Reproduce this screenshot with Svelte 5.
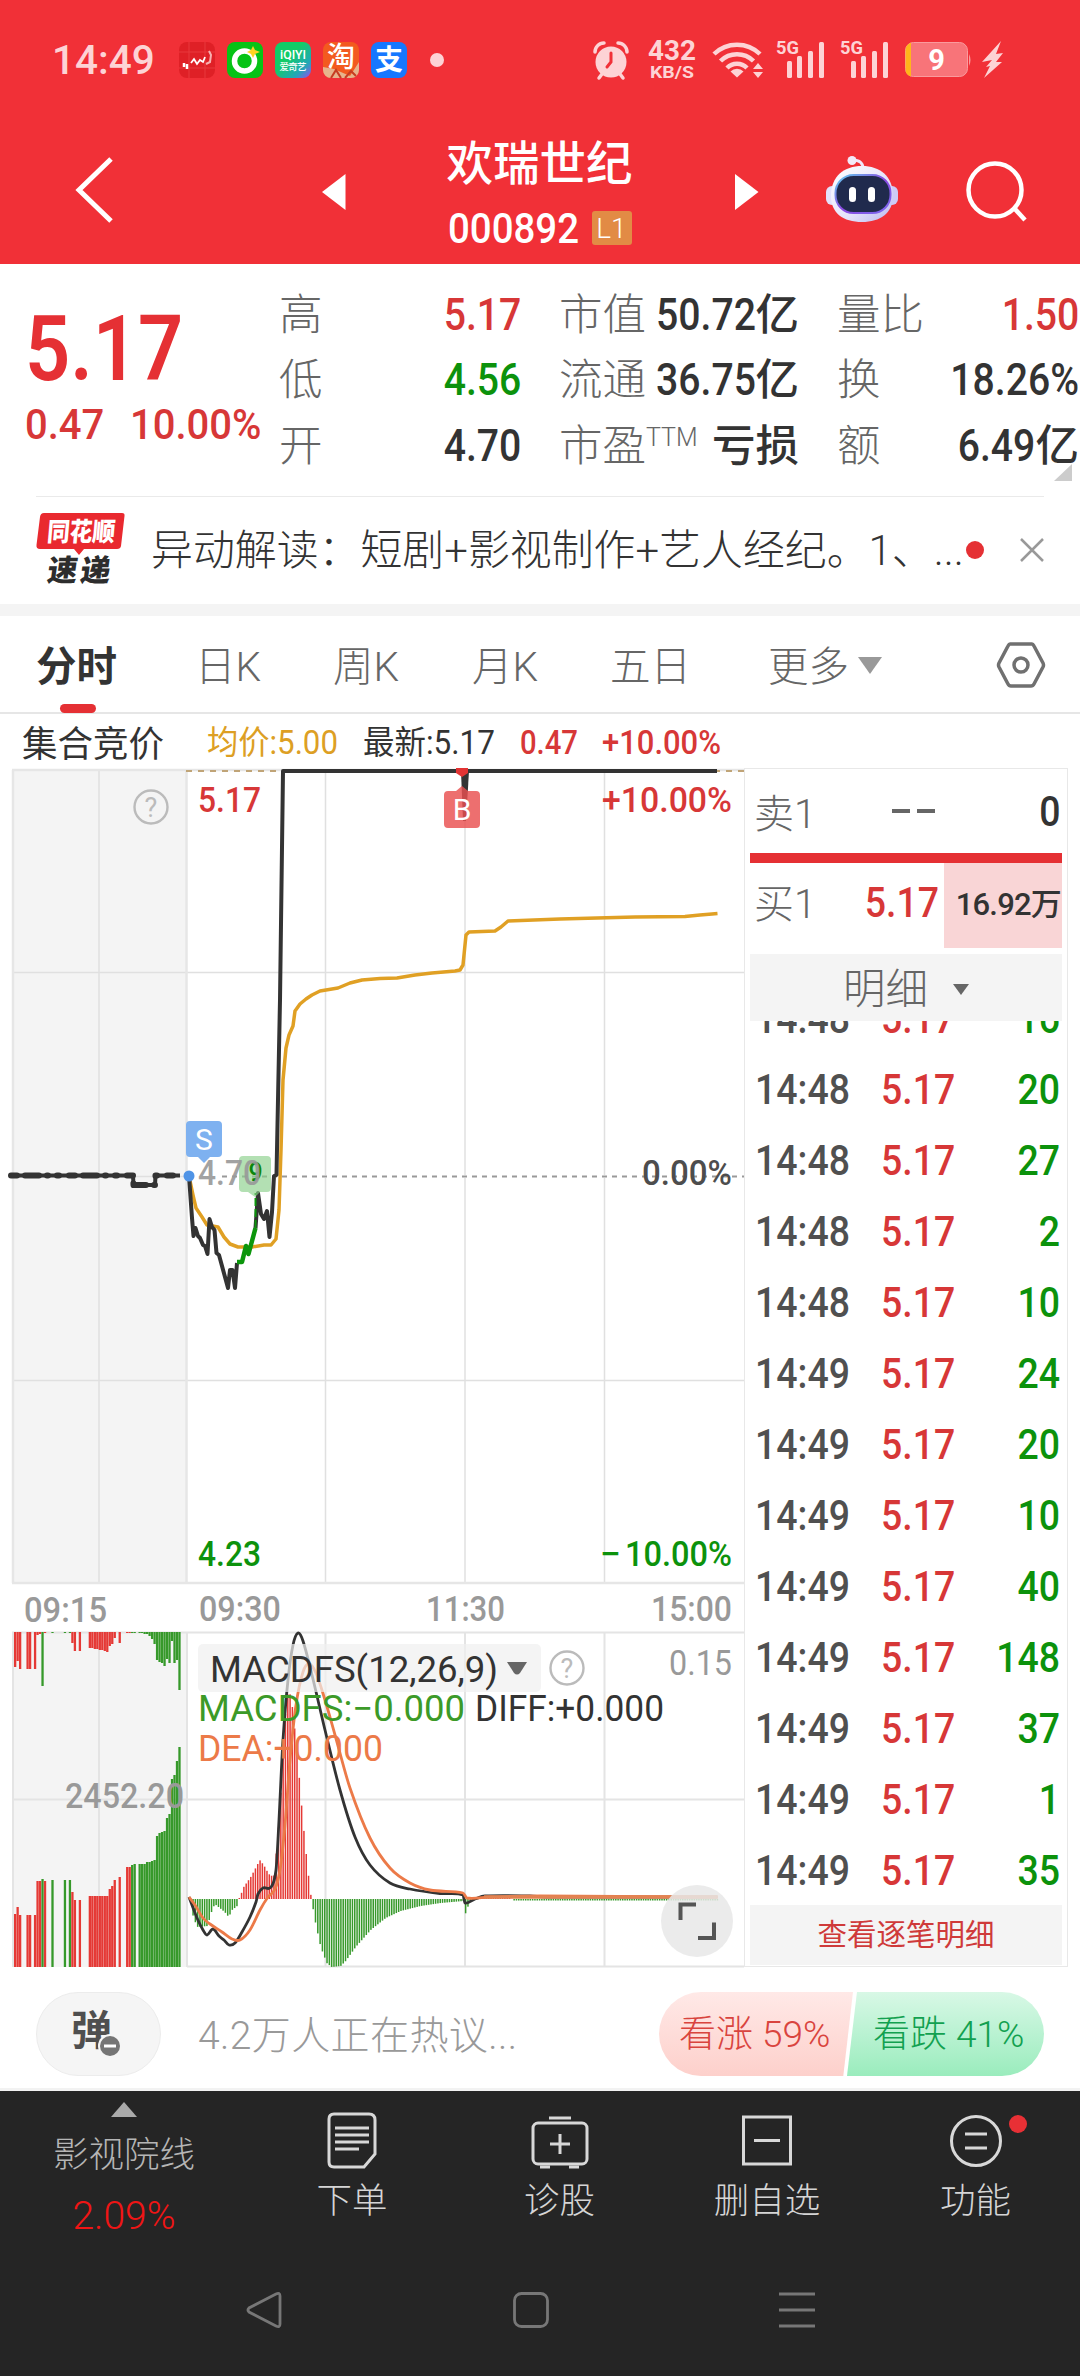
<script lang="ts">
    type Point = [number, number];

    const quotes = [
        { label: "高", value: "5.17", unit: "", tone: "up" },
        { label: "市值", value: "50.72", unit: "亿", tone: "" },
        { label: "量比", value: "1.50", unit: "", tone: "up" },
        { label: "低", value: "4.56", unit: "", tone: "down" },
        { label: "流通", value: "36.75", unit: "亿", tone: "" },
        { label: "换", value: "18.26%", unit: "", tone: "" },
        { label: "开", value: "4.70", unit: "", tone: "" },
        { label: "市盈", sup: "TTM", value: "", unit: "亏损", tone: "" },
        { label: "额", value: "6.49", unit: "亿", tone: "" },
    ];

    const trades = [
        { time: "14:48", price: "5.17", volume: 16 },
        { time: "14:48", price: "5.17", volume: 20 },
        { time: "14:48", price: "5.17", volume: 27 },
        { time: "14:48", price: "5.17", volume: 2 },
        { time: "14:48", price: "5.17", volume: 10 },
        { time: "14:49", price: "5.17", volume: 24 },
        { time: "14:49", price: "5.17", volume: 20 },
        { time: "14:49", price: "5.17", volume: 10 },
        { time: "14:49", price: "5.17", volume: 40 },
        { time: "14:49", price: "5.17", volume: 148 },
        { time: "14:49", price: "5.17", volume: 37 },
        { time: "14:49", price: "5.17", volume: 1 },
        { time: "14:49", price: "5.17", volume: 35 },
    ];

    const tabs = ["日K", "周K", "月K", "五日"];
    const gridX = [99, 325.5, 465, 604.5];

    const priceLine =
        "189,1176 190,1190 192,1218 193.5,1236 195.5,1228 198,1236 200,1238 203,1245 205,1246 207.5,1254 209.5,1219 212,1227 214.5,1230 216.5,1253 219,1255 228,1288 230,1270 232.5,1270 235,1288 237,1263";
    const reboundLine = "237,1262 242,1262 246,1246 248.5,1254 255.5,1228";
    const surgeLine =
        "255.5,1228 258,1193 261,1214 264,1219 267,1211 269.5,1237 272,1212 274,1176 276.5,1175 280,1000 283,771 717,771";
    const averageLine =
        "189,1176 193,1195 196,1208 202,1217 207,1225 218,1227 224,1237 230,1244 238,1247 252,1247 264,1245 271,1245 276,1239 279,1210 281,1150 283,1080 286,1048 289,1035 293,1026 295,1011 300,1004 306,999 312,995 320,991 338,988 350,983 362,980 380,978.5 397,978 415,975 432,973 455,971 460,970 463,965 466,935 469,932 495,931 501,927 508,921 560,919 597,918 635,917 685,916.5 700,915 712,914 717.5,913.5";
    const auctionLine =
        "11,1175.5 133,1175.5 133.5,1185 155,1185 155.5,1175.5 180,1175.5";

    const diffPoints: Point[] = [
        [189, 1897], [192, 1905], [197, 1918], [203, 1930], [207, 1935], [213, 1929],
        [219, 1936], [224, 1940], [229, 1945], [235, 1943], [242, 1932], [250, 1917],
        [256, 1902], [258, 1894], [263, 1888], [271, 1887], [276, 1870], [279, 1820],
        [283, 1740], [288, 1680], [293, 1645], [298, 1633], [303, 1641], [312, 1675],
        [325, 1730], [340, 1790], [355, 1837], [370, 1865], [390, 1883], [410, 1889],
        [440, 1893.5], [463, 1895], [465, 1903], [475, 1899], [485, 1896], [530, 1896],
        [545, 1897], [717, 1897],
    ];
    const deaPoints: Point[] = [
        [189, 1897], [195, 1905], [203, 1918], [210, 1924], [222, 1932], [232, 1939],
        [240, 1940], [250, 1930], [260, 1910], [268, 1897], [275, 1889], [280, 1870],
        [285, 1825], [290, 1760], [296, 1705], [303, 1672], [309, 1664], [316, 1673],
        [325, 1700], [335, 1735], [350, 1788], [370, 1838], [390, 1868], [410, 1883],
        [430, 1890], [463, 1893], [467, 1898], [490, 1897], [540, 1896], [717, 1897],
    ];

    // Histogram outline: negative values are drawn above the zero line
    const histogram: Point[] = [
        [189, 0], [193, 20], [197, 28], [207, 27], [210, 15], [214, 5], [219, 9],
        [224, 13], [228, 18], [232, 10], [236, 8], [238, 0], [240, -4], [243, -12],
        [250, -22], [256, -33], [259, -39], [263, -34], [268, -25], [273, -22],
        [277, -60], [281, -120], [285, -190], [288, -212], [292, -190], [297, -140],
        [302, -80], [307, -30], [310, -5], [311, 2], [315, 25], [320, 48], [326, 64],
        [331, 68], [340, 67], [345, 62], [355, 48], [370, 31], [385, 19], [400, 12],
        [420, 7], [440, 4], [463, 2], [465, 15], [468, 5], [471, 1], [480, -1],
        [510, -1], [513, 1.5], [718, 1.5],
    ];

    function valueAt(points: Point[], x: number): number {
        for (let i = 1; i < points.length; i++) {
            const [x0, y0] = points[i - 1];
            const [x1, y1] = points[i];
            if (x <= x1) return y0 + ((x - x0) / (x1 - x0)) * (y1 - y0);
        }
        return 0;
    }

    // Bezier through all points, tangents taken from the neighbours
    function smooth(points: Point[]): string {
        let d = `M${points[0][0]} ${points[0][1]}`;
        for (let i = 1; i < points.length; i++) {
            const p0 = points[Math.max(i - 2, 0)];
            const p1 = points[i - 1];
            const p2 = points[i];
            const p3 = points[Math.min(i + 1, points.length - 1)];
            const k = (p2[0] - p1[0]) / 3;
            const s1 = (p2[1] - p0[1]) / (p2[0] - p0[0]);
            const s2 = (p3[1] - p1[1]) / (p3[0] - p1[0]);
            d += `C${p1[0] + k} ${p1[1] + k * s1} ${p2[0] - k} ${p2[1] - k * s2} ${p2[0]} ${p2[1]}`;
        }
        return d;
    }

    const macdBars = Array.from({ length: 229 }, (_, i) => {
        const x = 190 + i * 2.31;
        return { x, h: valueAt(histogram, x) };
    });

    // [slot, colour, unmatched volume, matched volume]
    const auction: [number, string, number, number][] = [
        [0, "r", 35, 53], [1, "r", 29, 60], [2, "r", 37, 52], [5, "r", 37, 52],
        [6, "r", 37, 52], [8, "r", 37, 52], [9, "r", 3, 86], [10, "r", 2, 86],
        [11, "g", 54, 88], [12, "r", 1, 86], [15, "g", 1, 87], [20, "g", 1, 87],
        [22, "g", 1, 87], [23, "r", 11, 75], [24, "r", 19, 67], [26, "r", 19, 67],
        [30, "r", 16, 71], [31, "r", 16, 71], [32, "r", 17, 71], [33, "r", 17, 71],
        [34, "r", 18, 71], [35, "r", 18, 71], [36, "r", 19, 71], [37, "r", 20, 71],
        [38, "r", 14, 78], [39, "r", 12, 81], [40, "r", 6, 87], [42, "r", 11, 90],
        [45, "r", 1, 100], [46, "r", 1, 100], [47, "g", 1, 102], [48, "g", 1, 103],
        [50, "g", 1, 103], [51, "g", 1, 103], [52, "g", 2, 103], [53, "g", 2, 105],
        [54, "g", 4, 105], [55, "g", 7, 106], [56, "g", 12, 107], [57, "g", 28, 131],
        [58, "g", 30, 134], [59, "g", 31, 135], [60, "g", 34, 136], [61, "g", 27, 149],
        [62, "g", 31, 153], [63, "g", 9, 188], [64, "g", 31, 192], [65, "g", 28, 206],
        [66, "g", 58, 220],
    ];
</script>

{#snippet label(text: string, x: number, y: number, width: number, size: number, tone: string)}
    <text {x} {y} class="chart-label {tone}" font-size={size} textLength={width} lengthAdjust="spacingAndGlyphs">{text}</text>
{/snippet}

{#snippet help(x: number, y: number)}
    <circle cx={x} cy={y} r="16.5" fill="none" stroke="#bbb" stroke-width="2.4" />
    <text {x} y={y + 10} class="help" text-anchor="middle">?</text>
{/snippet}

{#snippet signal()}
    <svg width="50" height="38" viewBox="0 0 50 38" fill="#fdd3d5">
        <text x="0" y="13" font-size="18" font-weight="700" textLength="23" lengthAdjust="spacingAndGlyphs">5G</text>
        <rect x="11" y="20" width="5" height="17" rx="1.5" />
        <rect x="21" y="15" width="5" height="22" rx="1.5" />
        <rect x="32" y="10" width="5" height="27" rx="1.5" />
        <rect x="43" y="1" width="5" height="36" rx="1.5" />
    </svg>
{/snippet}

<div class="app">
    <header>
        <div class="status">
            <span class="clock">14:49</span>
            <div class="notices">
                <svg width="36" height="36" viewBox="0 0 36 36">
                    <rect width="36" height="36" rx="8" fill="#df2026" />
                    <path d="M0 10H36M0 26H36M10 0V36M26 0V36" stroke="#e8383c" />
                    <path d="M5 25V21M8 27V22" stroke="#fff" stroke-width="2.5" />
                    <path d="M12 21L15 17L18 22L21 18L24 20L26 15" stroke="#fff" stroke-width="1.8" fill="none" />
                    <path d="M30 9L32 13L31 20L27 22" stroke="#f7b0b0" stroke-width="2" fill="none" />
                </svg>
                <svg width="36" height="36" viewBox="0 0 36 36">
                    <rect width="36" height="36" rx="8" fill="#06c316" />
                    <circle cx="17.5" cy="19" r="10" fill="none" stroke="#fff" stroke-width="5.5" />
                    <path d="M26 4L28 8L33 10L28 12L26 16L24 12L20 10L24 8Z" fill="#ffd321" />
                </svg>
                <svg width="36" height="36" viewBox="0 0 36 36">
                    <defs>
                        <linearGradient id="iqiyi" x1="0" y1="0" x2="1" y2="1">
                            <stop offset="0.4" stop-color="#12cc67" />
                            <stop offset="0.75" stop-color="#22a7b7" />
                            <stop offset="1" stop-color="#9a4cf0" />
                        </linearGradient>
                    </defs>
                    <rect width="36" height="36" rx="8" fill="url(#iqiyi)" />
                    <text x="5" y="17" font-size="12" font-weight="500" fill="#fff" textLength="26" lengthAdjust="spacingAndGlyphs">iQIYI</text>
                    <text x="4.5" y="28" font-size="9.5" font-weight="500" fill="#fff" textLength="27">爱奇艺</text>
                </svg>
                <svg width="36" height="36" viewBox="0 0 36 36">
                    <rect width="36" height="36" rx="8" fill="#f35a1f" />
                    <path d="M0 25L11 27L27 34L36 20V28A8 8 0 0 1 28 36H8A8 8 0 0 1 0 28Z" fill="#e7b48c" />
                    <path d="M8 36L13 28L18 36M22 36L28 29L33 34" stroke="#c63d22" stroke-width="2" fill="none" />
                    <text x="4" y="25" font-size="28" font-weight="500" fill="#fff">淘</text>
                </svg>
                <svg width="36" height="36" viewBox="0 0 36 36">
                    <rect width="36" height="36" rx="8" fill="#1677ff" />
                    <text x="4" y="28" font-size="28" font-weight="700" fill="#fff">支</text>
                </svg>
            </div>
            <span class="more-dot"></span>
            <div class="system">
                <svg width="36" height="38" viewBox="0 0 36 38">
                    <circle cx="18" cy="21" r="15.5" fill="#fdd3d5" />
                    <path d="M2 11A9 9 0 0 1 11 2M25 2A9 9 0 0 1 34 11M9 33L6 37M27 33L30 37" stroke="#fdd3d5" stroke-width="3.5" stroke-linecap="round" fill="none" />
                    <path d="M18 12V21L14 26" stroke="#f13037" stroke-width="3" stroke-linecap="round" fill="none" />
                </svg>
                <svg width="52" height="38" viewBox="0 0 52 38" fill="#fdd3d5" font-weight="700">
                    <text x="1" y="19" font-size="27" textLength="48" lengthAdjust="spacingAndGlyphs">432</text>
                    <text x="3" y="37" font-size="17" textLength="44" lengthAdjust="spacingAndGlyphs">KB/S</text>
                </svg>
                <svg width="52" height="38" viewBox="0 0 52 38" fill="none" stroke="#fdd3d5" stroke-width="4.5">
                    <path d="M2 13A33 33 0 0 1 48 13M8.5 20A23.5 23.5 0 0 1 41.5 20M15 27A14 14 0 0 1 35 27" />
                    <path d="M25 36.5L18.5 30.5A9 9 0 0 1 31.5 30.5Z" fill="#fdd3d5" stroke="none" />
                    <path d="M41 28L46 22L51 28ZM41 31L46 37L51 31Z" fill="#fdd3d5" stroke="none" />
                </svg>
                {@render signal()}
                {@render signal()}
                <svg width="67" height="36" viewBox="0 0 67 36">
                    <rect x="0.5" y="0.5" width="62" height="34" rx="8" fill="#f87479" stroke="#fa9a9d" />
                    <path d="M8 0.5A7.5 7.5 0 0 0 0.5 8V27A7.5 7.5 0 0 0 6 34.5V1Z" fill="#ffb51b" />
                    <path d="M64 12Q67 18 64 24Z" fill="#fa9a9d" />
                    <text x="31.5" y="28" font-size="29" font-weight="700" fill="#fff" text-anchor="middle">9</text>
                </svg>
                <svg width="22" height="38" viewBox="0 0 22 38">
                    <path d="M19 0L0 21L10 19L4 26L8 25L2 37L20 21L14 21L21 12L14 13Z" fill="#fdd3d5" />
                </svg>
            </div>
        </div>
        <div class="titlebar">
            <svg class="back" width="38" height="66" viewBox="0 0 38 66">
                <path d="M35 2L3 33L35 64" fill="none" stroke="#fff" stroke-width="5" />
            </svg>
            <svg width="24" height="36" viewBox="0 0 24 36"><path d="M0 18L23.5 0V36Z" fill="#fff" /></svg>
            <div class="stock">
                <h1>欢瑞世纪</h1>
                <div class="code">
                    <svg width="132" height="34" viewBox="0 0 132 34">
                        <text x="0" y="32" font-size="42" font-weight="500" fill="#fff" textLength="131" lengthAdjust="spacingAndGlyphs">000892</text>
                    </svg>
                    <span class="level">L1</span>
                </div>
            </div>
            <svg class="next" width="24" height="36" viewBox="0 0 24 36"><path d="M23.5 18L0 0V36Z" fill="#fff" /></svg>
            <svg class="robot" width="74" height="68" viewBox="0 0 74 68">
                <defs>
                    <linearGradient id="shell" x1="0" y1="0" x2="1" y2="1">
                        <stop offset="0" stop-color="#fff" />
                        <stop offset="0.6" stop-color="#e4e2fa" />
                        <stop offset="1" stop-color="#b9b6f0" />
                    </linearGradient>
                    <linearGradient id="visor" x1="0" y1="0" x2="1" y2="1">
                        <stop offset="0" stop-color="#5fd0ee" />
                        <stop offset="0.5" stop-color="#8a49e0" />
                        <stop offset="1" stop-color="#7a6af0" />
                    </linearGradient>
                </defs>
                <path d="M27 4Q39 4 38 14" fill="none" stroke="#f0e6fa" stroke-width="3" />
                <circle cx="27" cy="4.5" r="4.5" fill="#f3e9f8" />
                <rect x="1" y="30" width="12" height="19" rx="6" fill="#e3e1fb" />
                <rect x="60" y="30" width="13" height="19" rx="6" fill="#cdcbf7" />
                <path d="M37 10C55 10 68 20 68 40C68 57 55 66 37 66C18 66 6 57 6 40C6 20 19 10 37 10Z" fill="url(#shell)" />
                <rect x="10.5" y="19" width="55" height="38" rx="18" fill="#202a4d" stroke="url(#visor)" stroke-width="2" />
                <rect x="24" y="31" width="7" height="15" rx="3.5" fill="#fff" />
                <rect x="43" y="31" width="7" height="15" rx="3.5" fill="#fff" />
            </svg>
            <svg width="62" height="62" viewBox="0 0 62 62" fill="none" stroke="#fff" stroke-width="4.5">
                <circle cx="29" cy="29" r="26.5" />
                <path d="M48 47L59 59" />
            </svg>
        </div>
    </header>

    <section class="quote">
        <div class="price">
            <div class="last"><span class="din">5.17</span></div>
            <div class="change"><span class="din">0.47</span><span class="din">10.00%</span></div>
        </div>
        <div class="stats">
            {#each quotes as q}
                <div class="stat">
                    <span class="name">{q.label}{#if q.sup}<sup>{q.sup}</sup>{/if}</span>
                    <span class="value {q.tone}"><span class="din right">{q.value}</span>{q.unit}</span>
                </div>
            {/each}
            <span class="corner"></span>
        </div>
    </section>

    <section class="news">
        <svg width="90" height="76" viewBox="0 0 90 76">
            <path d="M8 1H86Q89 1 88.5 4L85 34Q84.5 37 81 37H48L43 43L38 37H4Q0 37 0.5 33L4 5Q4.5 1 8 1Z" fill="#e9292f" />
            <text x="13" y="29" font-size="26" font-weight="900" fill="#fff" textLength="68" lengthAdjust="spacingAndGlyphs" transform="skewX(-5)">同花顺</text>
            <text x="20" y="69" font-size="30" font-weight="900" fill="#2d2d2d" textLength="63" transform="skewX(-8)">速递</text>
        </svg>
        <p>异动解读：短剧+影视制作+艺人经纪。1、...</p>
        <span class="unread"></span>
        <svg class="close" width="24" height="24" viewBox="0 0 24 24"><path d="M1 1L23 23M23 1L1 23" stroke="#999" stroke-width="2.5" /></svg>
    </section>

    <nav class="tabs">
        <div class="tab active">分时</div>
        {#each tabs as tab}
            <div class="tab">{tab}</div>
        {/each}
        <div class="tab">更多<i></i></div>
        <svg width="48" height="46" viewBox="0 0 48 46" fill="none" stroke="#707070" stroke-width="3.5">
            <path d="M13 2H35Q36 2 37 4L46 21Q47 23 46 25L37 42Q36 44 34 44H14Q12 44 11 42L2 25Q1 23 2 21L11 4Q12 2 13 2Z" />
            <circle cx="24" cy="23" r="7" />
        </svg>
    </nav>

    <main>
        <div class="charts">
            <svg width="744" height="913" viewBox="0 714 744 913">
                {@render label("集合竞价", 22, 757, 142, 36, "dark")}
                {@render label("均价:5.00", 207, 754, 131, 33, "gold")}
                {@render label("最新:5.17", 363, 754, 132, 33, "dark")}
                {@render label("0.47", 520, 754, 58, 33, "up medium")}
                {@render label("+10.00%", 602, 754, 119, 33, "up medium")}

                <rect x="13" y="770" width="174" height="813" fill="#f4f4f4" />
                <g stroke="#e0e0e0" stroke-width="1.5">
                    <path d="M12 972.5H744M12 1380.5H744M13 1176.5H744" />
                    {#each gridX as x}
                        <path d="M{x} 770V1583" />
                    {/each}
                </g>
                <path d="M12 770H744M13 770V1583M186.5 770V1583M12 1583H744" stroke="#e6e6e6" stroke-width="2.5" />
                <path d="M186 771H744" stroke="#c0a477" stroke-width="2" stroke-dasharray="6 6" />
                <path d="M187.5 1176.5H744" stroke="#fff" stroke-width="3" />
                <path d="M222 1176.5H744" stroke="#999" stroke-width="2" stroke-dasharray="5 5" />
                {@render help(151, 807)}

                {@render label("5.17", 198, 812, 63, 35, "up medium")}
                {@render label("+10.00%", 602, 812, 130, 35, "up medium")}
                {@render label("0.00%", 642, 1185, 90, 35, "grey-dark medium")}
                {@render label("4.23", 198, 1566, 63, 35, "down medium")}
                {@render label("−", 600, 1566, 21, 35, "down medium")}
                {@render label("10.00%", 625, 1566, 107, 35, "down medium")}
                {@render label("09:15", 24, 1622, 83, 35, "grey medium")}
                {@render label("09:30", 199, 1621, 82, 35, "grey medium")}
                {@render label("11:30", 426, 1621, 79, 35, "grey medium")}
                {@render label("15:00", 651, 1621, 81, 35, "grey medium")}

                <polyline points={auctionLine} class="price-line" />
                <polyline points={auctionLine} class="price-line auction-dots" />
                <polyline points={averageLine} fill="none" stroke="#e0a024" stroke-width="3.5" stroke-linejoin="round" />
                <polyline points={priceLine} class="price-line" />
                <polyline points={reboundLine} fill="none" stroke="#0c960c" stroke-width="4.5" stroke-linejoin="round" />
                <polyline points={surgeLine} class="price-line" />
                <path d="M255.5 1228V1193" stroke="#0c960c" stroke-width="2" stroke-dasharray="8 3" />
                <circle cx="189" cy="1176" r="5.5" fill="#5094e6" />

                <path d="M190 1121H218Q222 1121 222 1125V1153Q222 1157 218 1157H210L204 1163L198 1157H190Q186 1157 186 1153V1125Q186 1121 190 1121Z" fill="#7eb1f0" />
                <text x="204" y="1150" class="marker" fill="#fff" text-anchor="middle">S</text>
                <path d="M243 1156H267Q271 1156 271 1160V1188Q271 1192 267 1192H260L255 1197L248 1192H243Q239 1192 239 1188V1160Q239 1156 243 1156Z" fill="#8ad08a" opacity="0.65" />
                <text x="255.5" y="1181" font-size="25" font-weight="500" fill="#0c860c" text-anchor="middle">9</text>
                <g opacity="0.9">
                    {@render label("4.70", 198, 1185, 63, 35, "grey medium")}
                </g>

                <path d="M461 771H469L466 821H463Z" fill="#333" />
                <path d="M456 768H468V773L462 777L456 773Z" fill="#e23333" />
                <path d="M448 791H456L462 786L468 791H476Q480 791 480 795V824Q480 828 476 828H448Q444 828 444 824V795Q444 791 448 791Z" fill="#e94f4f" opacity="0.82" />
                <text x="462" y="820" class="marker" fill="#fff" text-anchor="middle">B</text>
            </svg>

            <svg width="744" height="342" viewBox="0 1627 744 342">
                <rect x="13" y="1632" width="174" height="335" fill="#f4f4f4" />
                <g stroke="#e4e4e4" stroke-width="2">
                    <path d="M12 1632.5H744M12 1799.5H744M187 1966.5H744M13 1632V1967M187 1632V1967" />
                    {#each gridX as x}
                        <path d="M{x} 1632V1967" />
                    {/each}
                </g>
                {#each auction as [slot, color, top, bottom]}
                    <rect x={14 + slot * 2.49} y="1632" width="2.3" height={top} class="bar-{color}" />
                    <rect x={14 + slot * 2.49} y={1967 - bottom} width="2.3" height={bottom} class="bar-{color}" />
                {/each}
                {#each macdBars as bar}
                    <rect x={bar.x} y={bar.h < 0 ? 1899 + bar.h : 1899} width="1.5" height={Math.abs(bar.h)} class={bar.h < 0 ? "bar-r" : "bar-g"} />
                {/each}
                <path d={smooth(diffPoints)} fill="none" stroke="#333" stroke-width="2.8" />
                <path d={smooth(deaPoints)} fill="none" stroke="#ec7a48" stroke-width="2.8" />
                <path d="M484 1897H718" stroke="#e28352" stroke-width="3.5" />

                <rect x="198" y="1644" width="343" height="48" rx="5" fill="#f0f0f0" opacity="0.7" />
                {@render label("MACDFS(12,26,9)", 210, 1682, 288, 36, "dark")}
                <path d="M507 1662H527L520 1673Q517 1676 514 1673Z" fill="#666" />
                {@render help(567, 1668)}
                {@render label("0.15", 669, 1675, 63, 35, "grey")}
                {@render label("MACDFS:−0.000", 198, 1721, 267, 36, "leaf")}
                {@render label("DIFF:+0.000", 475, 1721, 189, 36, "dark")}
                {@render label("DEA:+0.000", 198, 1761, 185, 36, "orange")}
                {@render label("2452.20", 65, 1808, 119, 35, "grey medium")}

                <circle cx="697" cy="1921" r="36" fill="#e8e8e8" opacity="0.85" />
                <path d="M680.5 1920V1904.5H696M714 1922.5V1938H698" fill="none" stroke="#555" stroke-width="4" />
            </svg>
        </div>

        <aside>
            <div class="order">
                <span class="side">卖1</span>
                <span class="dash"><i></i><i></i></span>
                <span class="din right amount">0</span>
            </div>
            <div class="divider"></div>
            <div class="order bid">
                <span class="side">买1</span>
                <span class="din right bid-price">5.17</span>
                <span class="bid-volume">16.92万</span>
            </div>
            <div class="detail-head">明细<i></i></div>
            <div class="trades">
                {#each trades as trade}
                    <div class="trade">
                        <span class="din">{trade.time}</span>
                        <span class="din up">{trade.price}</span>
                        <span class="din right down">{trade.volume}</span>
                    </div>
                {/each}
            </div>
            <div class="detail-more">查看逐笔明细</div>
        </aside>
    </main>

    <section class="talk">
        <div class="barrage">
            <svg width="44" height="46" viewBox="0 0 44 46">
                <text x="-1" y="35" font-size="41" font-weight="700" fill="#4f4f4f">弹</text>
                <circle cx="38" cy="36" r="12" fill="#f5f5f5" />
                <circle cx="38" cy="36" r="10" fill="#757575" />
                <path d="M32 36H44" stroke="#fff" stroke-width="3" />
            </svg>
        </div>
        <p>4.2万人正在热议...</p>
        <div class="vote">
            <div class="rise">看涨 59%</div>
            <div class="fall">看跌 41%</div>
        </div>
    </section>

    <footer>
        <div class="toolbar">
            <div class="sector">
                <i></i>
                <span>影视院线</span>
                <b>2.09%</b>
            </div>
            <div class="tool">
                <svg width="60" height="60" viewBox="0 0 60 60" fill="none" stroke="#d8d8d8" stroke-width="3">
                    <path d="M12 4H47Q53 4 53 10V44L42 57H12Q7 57 7 52V9Q7 4 12 4Z" />
                    <path d="M13 18H47M13 25H47M13 32H47M13 39H37" />
                </svg>
                <span>下单</span>
            </div>
            <div class="tool">
                <svg width="60" height="60" viewBox="0 0 60 60" fill="none" stroke="#d8d8d8" stroke-width="3">
                    <rect x="3" y="13" width="54" height="41" rx="5" />
                    <path d="M19 8H41M30 24V44M20 34H40M10 57H20M39 57H49" />
                </svg>
                <span>诊股</span>
            </div>
            <div class="tool">
                <svg width="60" height="60" viewBox="0 0 60 60" fill="none" stroke="#d8d8d8" stroke-width="3">
                    <rect x="6.5" y="7" width="47" height="47" />
                    <path d="M17 30.5H43" />
                </svg>
                <span>删自选</span>
            </div>
            <div class="tool">
                <svg width="60" height="60" viewBox="0 0 60 60" fill="none" stroke="#d8d8d8" stroke-width="3">
                    <circle cx="30" cy="31" r="24.5" />
                    <path d="M19 24H41M19 38H41" />
                </svg>
                <span>功能</span>
                <em></em>
            </div>
        </div>
        <div class="sysnav">
            <svg width="36" height="38" viewBox="0 0 36 38"><path d="M30 3L3 17Q1 19 3 21L30 35Q34 37 34 33V5Q34 1 30 3Z" fill="none" stroke="#777" stroke-width="2.8" /></svg>
            <svg width="36" height="38" viewBox="0 0 36 38"><rect x="1.5" y="2.5" width="33" height="33" rx="7" fill="none" stroke="#777" stroke-width="2.8" /></svg>
            <svg width="36" height="38" viewBox="0 0 36 38"><path d="M0 3H36M0 19H36M0 35H36" stroke="#777" stroke-width="3" /></svg>
        </div>
    </footer>
</div>

<style>
    :global(body) {
        background: #fff;
    }

    .app {
        width: 1080px;
        height: 2376px;
        overflow: hidden;
        display: flex;
        flex-direction: column;
        background: #fff;
        color: #333;
        font-family: Roboto, "Noto Sans CJK SC", sans-serif;
    }

    .app > * {
        flex: none;
        box-sizing: border-box;
    }

    svg {
        display: block;
        flex: none;
        overflow: visible;
    }

    p,
    h1 {
        margin: 0;
        white-space: nowrap;
    }

    .din {
        display: inline-block;
        font-weight: 500;
        transform: scaleX(0.9);
        transform-origin: left center;
        white-space: nowrap;
    }

    .right {
        transform-origin: right center;
        text-align: right;
    }

    .up {
        color: #d73737;
        fill: #d73737;
    }

    .down {
        color: #0c920c;
        fill: #0c920c;
    }

    header {
        height: 264px;
        background: #f13037;
    }

    .status {
        height: 120px;
        display: flex;
        align-items: center;
        padding: 0 76px 0 52px;
    }

    .clock {
        width: 127px;
        font-size: 40.5px;
        font-weight: 500;
        line-height: 40px;
        color: #fdd3d5;
    }

    .notices {
        display: flex;
        gap: 12px;
    }

    .more-dot {
        width: 14px;
        height: 14px;
        margin-left: 23px;
        border-radius: 50%;
        background: #fdd3d5;
    }

    .system {
        margin-left: auto;
        display: grid;
        grid-template-columns: 54px 65px 64px 64px 65px 77px 22px;
        align-items: center;
    }

    .titlebar {
        height: 144px;
        display: grid;
        grid-template-columns: 246px 100px 235px 102px 207px 62px;
        align-items: center;
        padding-left: 76px;
    }

    .back {
        margin-top: -4px;
    }

    .stock {
        display: flex;
        flex-direction: column;
        align-items: center;
        height: 144px;
        padding-top: 18px;
        box-sizing: border-box;
    }

    .stock h1 {
        font-size: 46.5px;
        line-height: 52px;
        font-weight: 500;
        color: #fff;
    }

    .code {
        display: flex;
        align-items: center;
        gap: 12px;
        margin-top: 21px;
    }

    .level {
        width: 40px;
        height: 34px;
        border-radius: 3px;
        background: #e28b45;
        color: #fff;
        font-size: 28px;
        font-weight: 300;
        line-height: 35px;
        text-align: center;
    }

    .next {
        justify-self: end;
    }

    .robot {
        margin-left: 66px;
        margin-top: -4px;
    }

    .quote {
        height: 232px;
        display: flex;
    }

    .price {
        width: 279px;
        padding: 42px 0 0 25px;
        box-sizing: border-box;
        color: #e53034;
    }

    .last {
        font-size: 90px;
        line-height: 88px;
    }

    .last .din {
        font-weight: 600;
        transform: scaleX(0.88);
    }

    .change {
        display: flex;
        gap: 20px;
        font-size: 43px;
        line-height: 60px;
        color: #d73737;
    }

    .change .din {
        transform: scaleX(0.93);
    }

    .stats {
        flex: 1;
        position: relative;
        display: grid;
        grid-template-columns: 242px 240px 242px;
        grid-auto-rows: 65.3px;
        column-gap: 38px;
        align-content: start;
        padding-top: 19px;
    }

    .stat {
        display: flex;
        justify-content: space-between;
        align-items: center;
        white-space: nowrap;
        font-size: 43.5px;
        line-height: 65px;
    }

    .name {
        flex: none;
        color: #666;
        font-weight: 300;
    }

    .name sup {
        font-size: 25px;
        line-height: 1;
        vertical-align: 15px;
    }

    .value {
        font-weight: 500;
        display: flex;
        justify-content: flex-end;
        width: 0;
        flex: 1;
    }

    .corner {
        position: absolute;
        right: 8px;
        bottom: 15px;
        border-left: 18px solid transparent;
        border-bottom: 17px solid #ccc;
    }

    .news {
        height: 120px;
        display: flex;
        align-items: center;
        margin: 0 36px;
        padding-bottom: 13px;
        border-top: 1px solid #eaeaea;
    }

    .news p {
        width: 815px;
        margin-left: 25px;
        font-size: 41.9px;
        font-weight: 300;
        line-height: 54px;
        padding-top: 2px;
    }

    .unread {
        flex: none;
        width: 18px;
        height: 18px;
        border-radius: 50%;
        background: #e53034;
    }

    .close {
        margin-left: auto;
    }

    .tabs {
        height: 110px;
        margin-top: -12px;
        border-top: 12px solid #f4f4f4;
        border-bottom: 2px solid #e6e6e6;
        display: grid;
        grid-template-columns: 159px 138px 139px 138px 158px 229px 48px;
        align-items: center;
        padding-left: 36px;
    }

    .tab {
        position: relative;
        font-size: 40.5px;
        font-weight: 300;
        line-height: 92px;
        padding-top: 5px;
        color: #666;
    }

    .tab.active {
        color: #333;
        font-weight: 700;
    }

    .tab.active::after {
        content: "";
        position: absolute;
        left: 24px;
        bottom: 0;
        width: 36px;
        height: 9px;
        border-radius: 5px;
        background: #e53034;
    }

    .tab i {
        display: inline-block;
        margin-left: 9px;
        vertical-align: 7px;
        border: 12px solid transparent;
        border-top: 17px solid #999;
        border-bottom: 0;
    }

    main {
        display: flex;
        height: 1253px;
    }

    .charts {
        width: 744px;
        height: 1253px;
    }

    .chart-label.medium {
        font-weight: 500;
    }

    .dark {
        fill: #333;
    }

    .gold {
        fill: #dd9f24;
    }

    .grey {
        fill: #999;
    }

    .grey-dark {
        fill: #4d4d4d;
    }

    .leaf {
        fill: #3c9a28;
    }

    .orange {
        fill: #ec7a48;
    }

    .help {
        font-size: 27px;
        fill: #bbb;
    }

    .marker {
        font-size: 30px;
    }

    .price-line {
        fill: none;
        stroke: #333;
        stroke-width: 4;
        stroke-linejoin: round;
    }

    .auction-dots {
        stroke-width: 6;
        stroke-linecap: round;
        stroke-dasharray: 6 8 14 8 1 9 2 10;
    }

    .bar-r {
        fill: #e53935;
    }

    .bar-g {
        fill: #36992a;
    }

    aside {
        width: 324px;
        height: 1199px;
        margin-top: 54px;
        padding: 0 5px;
        box-sizing: border-box;
        border: 1.5px solid #e8e8e8;
        display: flex;
        flex-direction: column;
    }

    aside .din {
        transform: scaleX(0.87);
    }

    .order {
        display: flex;
        align-items: center;
        height: 84px;
        flex: none;
        font-size: 43px;
        padding: 0 2px 0 4px;
    }

    .side {
        width: 138px;
        font-size: 40px;
        font-weight: 300;
        color: #666;
    }

    .dash {
        display: flex;
        gap: 7px;
    }

    .dash i {
        width: 18px;
        height: 4px;
        background: #666;
    }

    .amount {
        margin-left: auto;
    }

    .divider {
        flex: none;
        height: 10px;
        background: #e53034;
    }

    .bid {
        height: 85px;
        padding-right: 0;
    }

    .bid .side {
        width: 90px;
        padding-bottom: 9px;
    }

    .bid .bid-price {
        width: 95px;
        padding-bottom: 8px;
        color: #d73737;
    }

    .bid-volume {
        width: 118px;
        margin-left: auto;
        box-sizing: border-box;
        padding-right: 1px;
        background: #f9d5d6;
        font-size: 31px;
        font-weight: 500;
        letter-spacing: -0.8px;
        line-height: 84px;
        height: 85px;
        text-align: right;
    }

    .detail-head {
        flex: none;
        height: 67px;
        margin-top: 6px;
        background: #f4f4f4;
        color: #666;
        font-size: 42.5px;
        font-weight: 300;
        line-height: 71px;
        text-align: center;
    }

    .detail-head i {
        display: inline-block;
        margin-left: 25px;
        vertical-align: 9px;
        border: 8px solid transparent;
        border-top: 11px solid #666;
        border-bottom: 0;
    }

    .trades {
        flex: none;
        height: 884px;
        overflow: hidden;
        display: flex;
        flex-direction: column;
        justify-content: flex-end;
    }

    .trade {
        flex: none;
        height: 71px;
        display: grid;
        grid-template-columns: 126px 100px 1fr;
        align-items: center;
        padding: 0 2px 0 5px;
        font-size: 43px;
        color: #505050;
    }

    .detail-more {
        flex: none;
        height: 60px;
        background: #f4f4f4;
        color: #cf3a3a;
        font-size: 29.5px;
        line-height: 61px;
        text-align: center;
    }

    .talk {
        height: 124px;
        display: flex;
        align-items: center;
        padding: 13px 36px 0;
        border-bottom: 3px solid #f2f2f2;
    }

    .barrage {
        width: 125px;
        height: 84px;
        border-radius: 42px;
        box-sizing: border-box;
        border: 1px solid #ececec;
        background: #f5f5f5;
        display: flex;
        align-items: center;
        padding-left: 35px;
        padding-bottom: 2px;
    }

    .talk p {
        margin-left: 37px;
        padding-bottom: 4px;
        font-size: 39px;
        font-weight: 300;
        letter-spacing: 0.4px;
        color: #999;
    }

    .vote {
        margin-left: auto;
        display: flex;
        width: 385px;
        height: 84px;
        border-radius: 42px;
        overflow: hidden;
        font-size: 37px;
        font-weight: 300;
        line-height: 85px;
        white-space: nowrap;
    }

    .rise {
        width: 196px;
        box-sizing: border-box;
        padding-left: 20px;
        color: #d9443e;
        background: linear-gradient(#ffe9e7, #fdd0cb);
        clip-path: polygon(0 0, 100% 0, 95% 100%, 0 100%);
    }

    .fall {
        width: 199px;
        margin-left: -6px;
        box-sizing: border-box;
        padding-left: 26px;
        color: #12a150;
        background: linear-gradient(#d8f8e6, #9aecbd);
        clip-path: polygon(10px 0, 100% 0, 100% 100%, 0 100%);
    }

    footer {
        flex: 1 !important;
        background: #252525;
    }

    .toolbar {
        display: grid;
        grid-template-columns: 248px 208px 207px 208px 209px;
        height: 150px;
        color: #d5d5d5;
        font-size: 35.5px;
        font-weight: 300;
    }

    .sector,
    .tool {
        position: relative;
        display: flex;
        flex-direction: column;
        align-items: center;
    }

    .sector i {
        margin-top: 11px;
        border: 13px solid transparent;
        border-bottom: 15px solid #aaa;
        border-top: 0;
    }

    .sector span {
        margin-top: 17px;
        line-height: 42px;
        color: #b5b5b5;
    }

    .sector b {
        margin-top: 19px;
        font-size: 39px;
        font-weight: 300;
        line-height: 42px;
        color: #f01515;
    }

    .tool svg {
        margin-top: 19px;
    }

    .tool span {
        margin-top: 10px;
        line-height: 42px;
    }

    .tool em {
        position: absolute;
        top: 24px;
        left: 138px;
        width: 18px;
        height: 18px;
        border-radius: 50%;
        background: #e83035;
    }

    .sysnav {
        display: grid;
        grid-template-columns: 267px 266px 36px;
        padding: 50px 0 0 246px;
    }
</style>
